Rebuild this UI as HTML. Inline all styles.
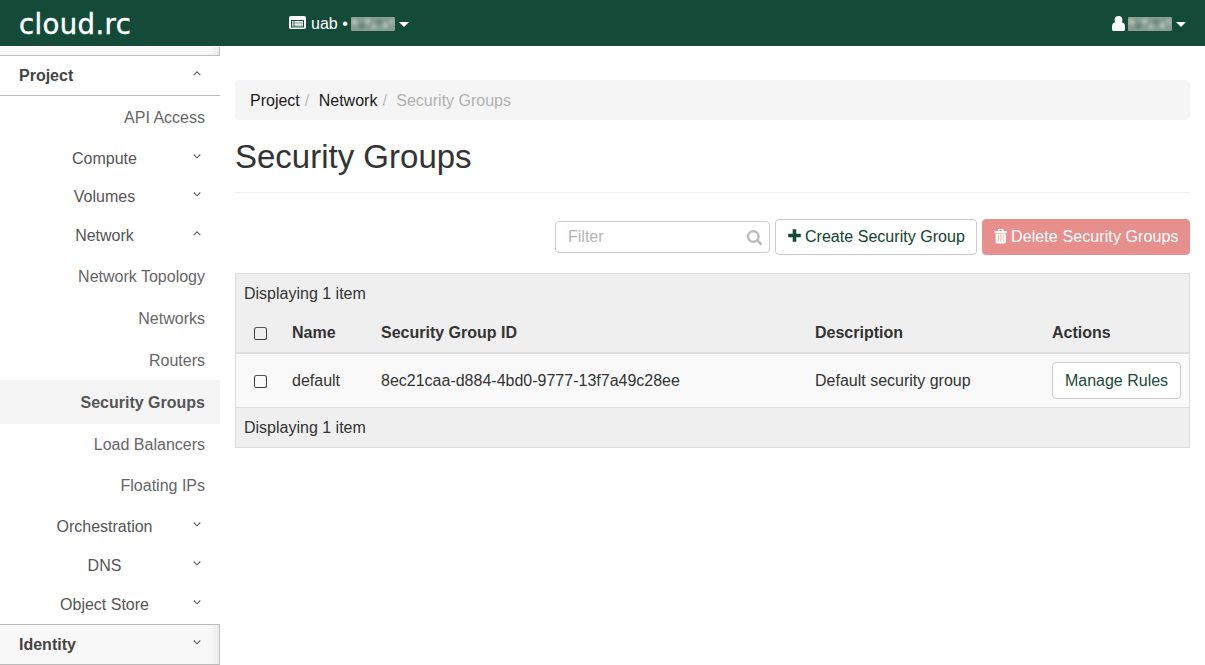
<!DOCTYPE html>
<html lang="en">
<head>
<meta charset="utf-8">
<title>Security Groups - cloud.rc</title>
<style>
*{box-sizing:border-box;}
html,body{margin:0;padding:0;}
body{width:1205px;height:665px;overflow:hidden;background:#fff;position:relative;
  font-family:"Liberation Sans",Arial,sans-serif;font-size:16px;color:#333;line-height:1.42857;}
a{text-decoration:none;color:inherit;}
/* ---------- top bar ---------- */
#topbar{position:absolute;left:0;top:0;width:1205px;height:46px;background:#144b38;color:#fff;}
#logo{position:absolute;left:19px;top:3.5px;font-family:"DejaVu Sans","Liberation Sans",sans-serif;font-size:27.5px;line-height:40px;color:#fff;letter-spacing:0.4px;-webkit-text-stroke:0.4px #fff;}
#ctx{position:absolute;left:289px;top:1px;height:46px;line-height:46px;font-size:16px;color:#fff;white-space:nowrap;}
#user{position:absolute;left:1112px;top:1px;height:46px;line-height:46px;color:#fff;white-space:nowrap;}
.blur{display:inline-block;vertical-align:middle;height:14px;color:transparent;font-size:1px;overflow:hidden;border-radius:1px;
  background:
   radial-gradient(circle at 8% 35%,rgba(190,205,198,.75) 0,rgba(190,205,198,0) 5px),
   radial-gradient(circle at 24% 65%,rgba(90,120,108,.7) 0,rgba(90,120,108,0) 5px),
   radial-gradient(circle at 38% 30%,rgba(185,200,194,.75) 0,rgba(185,200,194,0) 5px),
   radial-gradient(circle at 52% 70%,rgba(175,192,186,.7) 0,rgba(175,192,186,0) 5px),
   radial-gradient(circle at 64% 35%,rgba(95,125,113,.7) 0,rgba(95,125,113,0) 5px),
   radial-gradient(circle at 78% 60%,rgba(185,200,194,.75) 0,rgba(185,200,194,0) 5px),
   radial-gradient(circle at 93% 35%,rgba(170,188,181,.7) 0,rgba(170,188,181,0) 5px),
   #879c93;}
.caret{display:inline-block;width:0;height:0;border-left:5px solid transparent;border-right:5px solid transparent;border-top:5px solid #fff;vertical-align:middle;}
/* ---------- sidebar ---------- */
#side{position:absolute;left:0;top:46px;width:220px;height:619px;background:#fff;}
#side .strip{position:absolute;left:0;top:1px;width:220px;height:9px;background:linear-gradient(90deg,#f8f8f8 0,#f8f8f8 210px,#ebebeb 219px);border-bottom:1px solid #bdbdbd;border-right:1px solid #c2c2c2;}
#side .hd{position:absolute;left:0;width:220px;font-weight:bold;color:#444;padding-left:19px;}
#side .it{position:absolute;right:15px;white-space:nowrap;color:#666;text-align:right;}
#side .gp{position:absolute;left:0;width:209px;text-align:center;color:#555;}
#side .act{position:absolute;left:0;top:334px;width:220px;height:44px;background:#f5f5f5;}
.chev{position:absolute;left:192px;width:10px;height:6px;}
/* ---------- main ---------- */
#crumb{position:absolute;left:235px;top:80px;width:955px;height:40px;background:#f5f5f5;border-radius:4px;padding:1px 15px 0;line-height:40px;color:#1a1a1a;white-space:nowrap;}
#crumb .sep{color:#bbb;padding:0 5px;}
#crumb .cur{color:#b0b0b0;}
h1{position:absolute;left:235px;top:134px;margin:0;font-size:33px;font-weight:normal;line-height:46px;color:#333;white-space:nowrap;}
#hr{position:absolute;left:235px;top:192px;width:955px;height:1px;background:#eee;}
#filter{position:absolute;left:555px;top:221px;width:215px;height:32px;border:1px solid #ccc;border-radius:4px;background:#fff;padding:0 12px;line-height:30px;color:#b4b4b4;}
.btn{position:absolute;height:36px;border-radius:4px;line-height:34px;white-space:nowrap;text-align:center;}
#create{left:775px;top:219px;width:202px;border:1px solid #ccc;background:#fff;color:#123f30;}
#delete{left:982px;top:219px;width:208px;border:1px solid #e68f8c;background:#e68f8c;color:#fff;}
#tbl{position:absolute;left:235px;top:273px;width:955px;height:175px;background:#efefef;border:1px solid #ddd;}
#tbl .row{position:absolute;left:0;top:78px;width:953px;height:56px;background:#f9f9f9;border-top:2px solid #ddd;border-bottom:1px solid #ddd;}
#tbl .t{position:absolute;white-space:nowrap;line-height:22px;}
#tbl .th{font-weight:bold;color:#333;}
.cb{position:absolute;width:12.6px;height:13px;border:1.2px solid #3c3c3c;border-top:1.7px solid #555;border-radius:2.5px;background:transparent;}
#manage{left:816px;top:88px;width:129px;height:37px;line-height:36px;border:1px solid #ccc;background:#fff;color:#1c4a3a;}
</style>
</head>
<body>
<div id="topbar">
  <div id="logo">cloud.rc</div>
  <div id="ctx"><svg width="17" height="13" viewBox="0 0 17 13" style="vertical-align:0px;margin-right:5px"><rect x="0" y="0" width="17" height="13" rx="1.8" fill="#fff"/><rect x="2" y="4" width="13" height="7.5" fill="#1d4f3d"/><rect x="3" y="5" width="11" height="5.6" fill="#b9cbc3"/><rect x="3" y="5" width="11" height="1" fill="#eef3f0"/><rect x="3" y="8" width="11" height="1" fill="#e4ece8"/><rect x="4.6" y="5" width="0.9" height="5.6" fill="#3b6654"/></svg>uab • <span class="blur" style="width:44px;margin:0 -1px;position:relative;top:-1px">user</span> <span class="caret"></span></div>
  <div id="user"><svg width="13" height="15" viewBox="0 0 13 15" style="vertical-align:-2px;margin-right:4px;position:relative;top:-0.5px"><circle cx="6.5" cy="3.9" r="3.9" fill="#fff"/><path d="M0 13.6 V10.2 C0 7.6 1.8 6.4 4 6.2 L9 6.2 C11.2 6.4 13 7.6 13 10.2 V13.6 Q13 15 11.6 15 H1.4 Q0 15 0 13.6Z" fill="#fff"/></svg><span class="blur" style="width:44px;position:relative;top:-1px;margin-left:-1px">user</span> <span class="caret"></span></div>
</div>

<div id="side">
  <div class="strip"></div>
  <div class="act"></div>
  <div class="hd" style="top:19px">Project</div>
  <div style="position:absolute;left:0;top:49px;width:220px;height:1px;background:#bbb"></div>
  <div class="it" style="top:61px">API Access</div>
  <div class="gp" style="top:102px">Compute</div>
  <div class="gp" style="top:140px">Volumes</div>
  <div class="gp" style="top:179px">Network</div>
  <div class="it" style="top:220px">Network Topology</div>
  <div class="it" style="top:262px">Networks</div>
  <div class="it" style="top:304px">Routers</div>
  <div class="it" style="top:346px;font-weight:bold;color:#555">Security Groups</div>
  <div class="it" style="top:388px">Load Balancers</div>
  <div class="it" style="top:429px">Floating IPs</div>
  <div class="gp" style="top:470px">Orchestration</div>
  <div class="gp" style="top:509px">DNS</div>
  <div class="gp" style="top:548px">Object Store</div>
  <div style="position:absolute;left:0;top:578px;width:220px;height:41px;background:linear-gradient(90deg,#f8f8f8 0,#f8f8f8 210px,#ebebeb 219px);border-top:1px solid #bbb;border-right:1px solid #c2c2c2;border-bottom:1px solid #bbb"></div>
  <div class="hd" style="top:588px">Identity</div>
  <svg class="chev" style="top:24px" viewBox="0 0 10 6"><path d="M1.7 5.1 L5 1.8 L8.3 5.1" fill="none" stroke="#5c5c5c" stroke-width="1.1"/></svg>
  <svg class="chev" style="top:107px" viewBox="0 0 10 6"><path d="M1.7 1.5 L5 4.8 L8.3 1.5" fill="none" stroke="#5c5c5c" stroke-width="1.1"/></svg>
  <svg class="chev" style="top:145px" viewBox="0 0 10 6"><path d="M1.7 1.5 L5 4.8 L8.3 1.5" fill="none" stroke="#5c5c5c" stroke-width="1.1"/></svg>
  <svg class="chev" style="top:184px" viewBox="0 0 10 6"><path d="M1.7 5.1 L5 1.8 L8.3 5.1" fill="none" stroke="#5c5c5c" stroke-width="1.1"/></svg>
  <svg class="chev" style="top:475px" viewBox="0 0 10 6"><path d="M1.7 1.5 L5 4.8 L8.3 1.5" fill="none" stroke="#5c5c5c" stroke-width="1.1"/></svg>
  <svg class="chev" style="top:514px" viewBox="0 0 10 6"><path d="M1.7 1.5 L5 4.8 L8.3 1.5" fill="none" stroke="#5c5c5c" stroke-width="1.1"/></svg>
  <svg class="chev" style="top:553px" viewBox="0 0 10 6"><path d="M1.7 1.5 L5 4.8 L8.3 1.5" fill="none" stroke="#5c5c5c" stroke-width="1.1"/></svg>
  <svg class="chev" style="top:593px" viewBox="0 0 10 6"><path d="M1.7 1.5 L5 4.8 L8.3 1.5" fill="none" stroke="#5c5c5c" stroke-width="1.1"/></svg>
</div>

<div id="crumb">Project<span class="sep">/</span> Network<span class="sep">/</span> <span class="cur">Security Groups</span></div>
<h1>Security Groups</h1>
<div id="hr"></div>
<div id="filter">Filter<svg style="position:absolute;left:190px;top:7px" width="18" height="18" viewBox="0 0 18 18"><circle cx="7.3" cy="7.5" r="5.3" fill="none" stroke="#bbb" stroke-width="2.4"/><path d="M11.2 11.4 L14.8 14.8" stroke="#bbb" stroke-width="2.6" stroke-linecap="round"/></svg></div>
<div id="create" class="btn"><svg style="position:absolute;left:12px;top:9.2px" width="13" height="13" viewBox="0 0 13 13"><path d="M4.7 0.2 H8.3 V4.7 H12.8 V8.3 H8.3 V12.8 H4.7 V8.3 H0.2 V4.7 H4.7Z" fill="#144b38"/></svg><span style="position:absolute;left:29px;top:0;letter-spacing:0.03px">Create Security Group</span></div>
<div id="delete" class="btn"><svg style="position:absolute;left:11px;top:9px" width="14" height="15" viewBox="0 0 14 15"><path d="M4.6 2 V1.2 Q4.6 0.3 5.5 0.3 H8 Q8.9 0.3 8.9 1.2 V2" fill="none" stroke="#fff" stroke-width="1.2"/><rect x="0.4" y="2" width="12.7" height="1.9" rx="0.6" fill="#fff"/><path d="M1.6 4.4 H11.9 V13 Q11.9 14.6 10.3 14.6 H3.2 Q1.6 14.6 1.6 13Z" fill="#fff"/><rect x="3.9" y="5.6" width="1" height="7" fill="#efb3b1"/><rect x="6.25" y="5.6" width="1" height="7" fill="#efb3b1"/><rect x="8.6" y="5.6" width="1" height="7" fill="#efb3b1"/></svg><span style="position:absolute;left:28px;top:0;letter-spacing:0.1px">Delete Security Groups</span></div>

<div id="tbl">
  <div class="row"></div>
  <div class="t" style="left:8px;top:9px">Displaying 1 item</div>
  <div class="cb" style="left:18px;top:53px"></div>
  <div class="t th" style="left:56px;top:48px">Name</div>
  <div class="t th" style="left:145px;top:48px">Security Group ID</div>
  <div class="t th" style="left:579px;top:48px">Description</div>
  <div class="t th" style="left:816px;top:48px">Actions</div>
  <div class="cb" style="left:18px;top:101px"></div>
  <div class="t" style="left:56px;top:96px">default</div>
  <div class="t" style="left:145px;top:96px">8ec21caa-d884-4bd0-9777-13f7a49c28ee</div>
  <div class="t" style="left:579px;top:96px">Default security group</div>
  <div id="manage" class="btn">Manage Rules</div>
  <div class="t" style="left:8px;top:143px">Displaying 1 item</div>
</div>
</body>
</html>
